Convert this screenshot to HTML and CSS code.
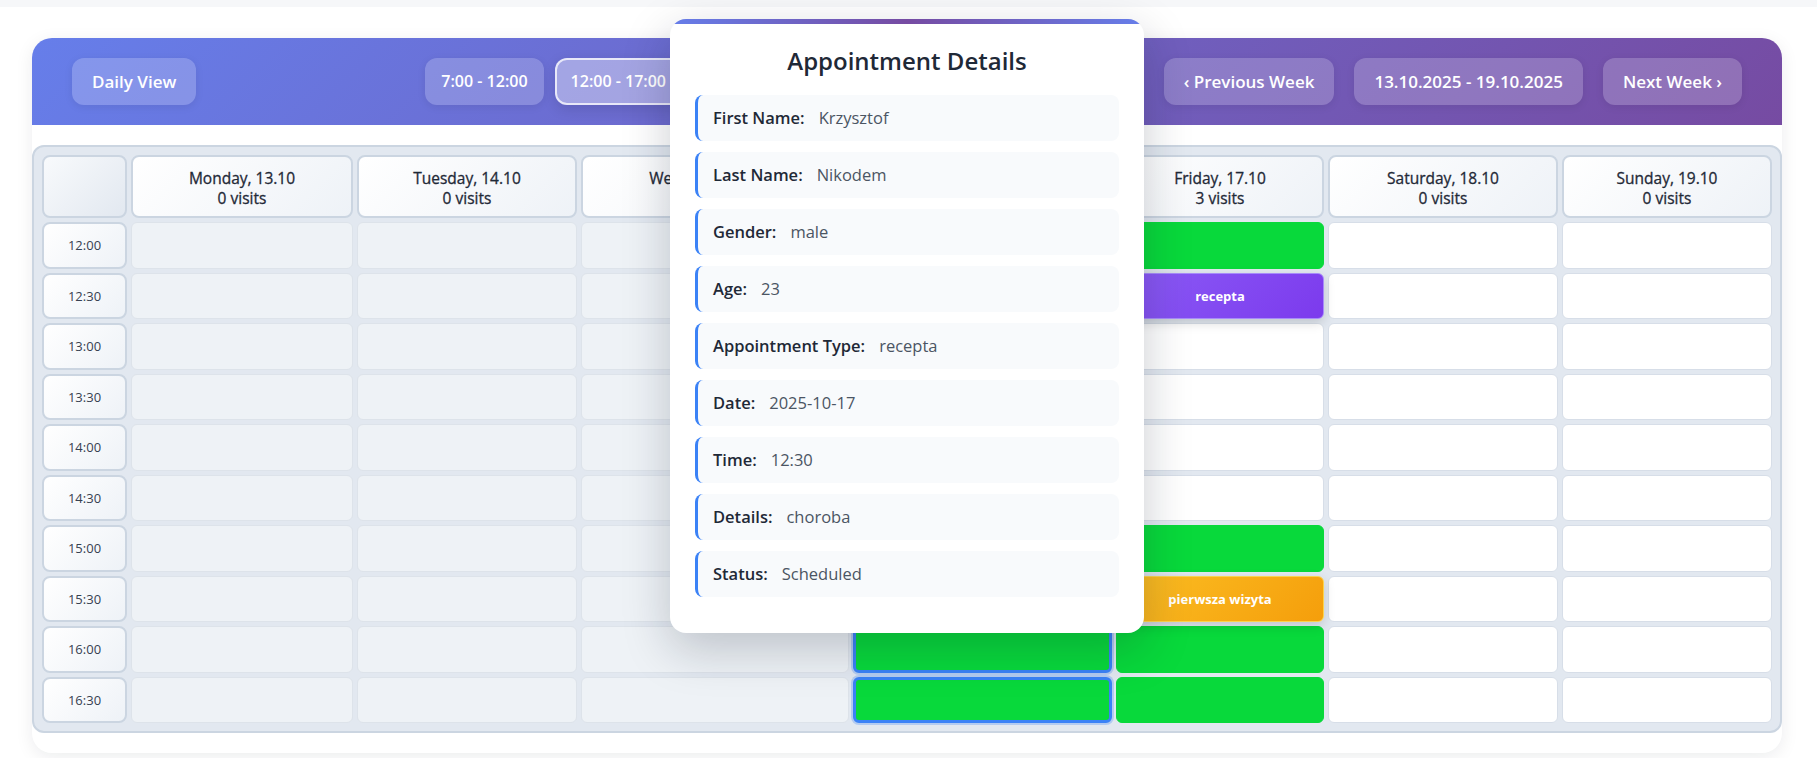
FILE: index.html
```html
<!DOCTYPE html>
<html lang="en">
<head>
<meta charset="utf-8">
<title>Weekly Calendar</title>
<link rel="stylesheet" href="styles.css">
</head>
<body>
<div class="page">
  <div class="card">
    <header class="toolbar">
      <button class="tb-btn">Daily View</button>
      <div class="ranges">
        <button class="tb-btn range">7:00 - 12:00</button>
        <button class="tb-btn range active">12:00 - 17:00</button>
        <button class="tb-btn range">17:00 - 22:00</button>
      </div>
      <div class="week-nav">
        <button class="tb-btn">‹ Previous Week</button>
        <button class="tb-btn">13.10.2025 - 19.10.2025</button>
        <button class="tb-btn">Next Week ›</button>
      </div>
    </header>
    <div class="calendar-wrap">
      <div class="calendar">
        <div class="corner"></div>
        <div class="day-head"><span>Monday, 13.10</span><span>0 visits</span></div>
        <div class="day-head"><span>Tuesday, 14.10</span><span>0 visits</span></div>
        <div class="day-head"><span>Wednesday, 15.10</span><span>0 visits</span></div>
        <div class="day-head"><span>Thursday, 16.10</span><span>2 visits</span></div>
        <div class="day-head"><span>Friday, 17.10</span><span>3 visits</span></div>
        <div class="day-head"><span>Saturday, 18.10</span><span>0 visits</span></div>
        <div class="day-head"><span>Sunday, 19.10</span><span>0 visits</span></div>

        <div class="time">12:00</div>
        <div class="slot past"></div><div class="slot past"></div><div class="slot past"></div><div class="slot past"></div>
        <div class="slot green"></div><div class="slot"></div><div class="slot"></div>

        <div class="time">12:30</div>
        <div class="slot past"></div><div class="slot past"></div><div class="slot past"></div><div class="slot past"></div>
        <div class="slot appt recepta">recepta</div><div class="slot"></div><div class="slot"></div>

        <div class="time">13:00</div>
        <div class="slot past"></div><div class="slot past"></div><div class="slot past"></div><div class="slot past"></div>
        <div class="slot"></div><div class="slot"></div><div class="slot"></div>

        <div class="time">13:30</div>
        <div class="slot past"></div><div class="slot past"></div><div class="slot past"></div><div class="slot past"></div>
        <div class="slot"></div><div class="slot"></div><div class="slot"></div>

        <div class="time">14:00</div>
        <div class="slot past"></div><div class="slot past"></div><div class="slot past"></div><div class="slot past"></div>
        <div class="slot"></div><div class="slot"></div><div class="slot"></div>

        <div class="time">14:30</div>
        <div class="slot past"></div><div class="slot past"></div><div class="slot past"></div><div class="slot past"></div>
        <div class="slot"></div><div class="slot"></div><div class="slot"></div>

        <div class="time">15:00</div>
        <div class="slot past"></div><div class="slot past"></div><div class="slot past"></div><div class="slot past"></div>
        <div class="slot green"></div><div class="slot"></div><div class="slot"></div>

        <div class="time">15:30</div>
        <div class="slot past"></div><div class="slot past"></div><div class="slot past"></div><div class="slot past"></div>
        <div class="slot appt first">pierwsza wizyta</div><div class="slot"></div><div class="slot"></div>

        <div class="time">16:00</div>
        <div class="slot past"></div><div class="slot past"></div><div class="slot past"></div><div class="slot green selected"></div>
        <div class="slot green"></div><div class="slot"></div><div class="slot"></div>

        <div class="time">16:30</div>
        <div class="slot past"></div><div class="slot past"></div><div class="slot past"></div><div class="slot green selected"></div>
        <div class="slot green"></div><div class="slot"></div><div class="slot"></div>
      </div>
    </div>
  </div>
</div>

<div class="modal">
  <h2 class="modal-title">Appointment Details</h2>
  <div class="field"><span class="label">First Name:</span><span class="value">Krzysztof</span></div>
  <div class="field"><span class="label">Last Name:</span><span class="value">Nikodem</span></div>
  <div class="field"><span class="label">Gender:</span><span class="value">male</span></div>
  <div class="field"><span class="label">Age:</span><span class="value">23</span></div>
  <div class="field"><span class="label">Appointment Type:</span><span class="value">recepta</span></div>
  <div class="field"><span class="label">Date:</span><span class="value">2025-10-17</span></div>
  <div class="field"><span class="label">Time:</span><span class="value">12:30</span></div>
  <div class="field"><span class="label">Details:</span><span class="value">choroba</span></div>
  <div class="field"><span class="label">Status:</span><span class="value">Scheduled</span></div>
</div>
</body>
</html>
```
FILE: styles.css
```css
* { box-sizing: border-box; }

html, body {
  margin: 0;
  padding: 0;
}

body {
  background: #f6f7f9;
  font-family: "Open Sans", "Noto Sans", "Liberation Sans", sans-serif;
  color: #1f2937;
  position: relative;
}

.page {
  margin-top: 7px;
  background: #ffffff;
  padding: 31px 35px 5px 32px;
}

.card {
  background: #ffffff;
  border-radius: 20px;
  box-shadow: 0 4px 18px rgba(15, 23, 42, 0.08);
  overflow: hidden;
  padding-bottom: 20px;
}

/* ---------- toolbar ---------- */
.toolbar {
  display: flex;
  align-items: center;
  padding: 20px 40px;
  background: linear-gradient(135deg, #667eea 0%, #764ba2 100%);
}

.tb-btn {
  font-family: inherit;
  font-size: 17px;
  font-weight: 600;
  line-height: 23px;
  color: #ffffff;
  background: rgba(255, 255, 255, 0.2);
  border: 2px solid transparent;
  border-radius: 12px;
  padding: 10px 18px;
  box-shadow: 0 2px 8px rgba(0, 0, 0, 0.08);
  white-space: nowrap;
  cursor: pointer;
}

.tb-btn.range {
  font-size: 16px;
  padding: 10px 14px;
}

.tb-btn.active {
  background: rgba(255, 255, 255, 0.38);
  border-color: rgba(255, 255, 255, 0.75);
  box-shadow: 0 4px 14px rgba(0, 0, 0, 0.12);
}

.ranges {
  display: flex;
  gap: 11px;
  margin-left: 229px;
}

.week-nav {
  display: flex;
  gap: 20px;
  margin-left: auto;
}

/* ---------- calendar ---------- */
.calendar-wrap {
  padding-top: 20px;
}

.calendar {
  display: grid;
  grid-template-columns: 85px 222px 220px 268px 259px 208px 230px 210px;
  grid-template-rows: 63px repeat(10, 46.5px);
  gap: 4px;
  background: #e2e8f0;
  border: 2px solid #cbd5e1;
  border-radius: 12px;
  padding: 8px;
}

.corner {
  border: 2px solid #cbd5e1;
  border-radius: 8px;
  background: linear-gradient(135deg, #f8fafc 0%, #e2e8f0 100%);
}

.day-head {
  border: 2px solid #cbd5e1;
  border-radius: 8px;
  background: linear-gradient(135deg, #ffffff 0%, #eef2f7 100%);
  display: flex;
  flex-direction: column;
  align-items: center;
  justify-content: center;
  padding-top: 3px;
  font-size: 15.5px;
  font-weight: 400;
  -webkit-text-stroke: 0.3px currentColor;
  line-height: 20px;
  color: #1f2937;
}

.time {
  border: 2px solid #cbd5e1;
  border-radius: 8px;
  background: linear-gradient(135deg, #ffffff 0%, #eef2f7 100%);
  display: flex;
  align-items: center;
  justify-content: center;
  font-size: 13px;
  color: #374151;
}

.slot {
  border: 1px solid #d7dee8;
  border-radius: 6px;
  background: #ffffff;
}

.slot.past {
  background: #eef2f6;
  border-color: #dde3ea;
}

.slot.green {
  background: #08d93b;
  border-color: #08d93b;
}

.slot.selected {
  border: 3px solid #3b82f6;
  box-shadow: 0 0 0 2px rgba(59, 130, 246, 0.28);
}

.slot.appt {
  display: flex;
  align-items: center;
  justify-content: center;
  color: #ffffff;
  font-size: 13px;
  font-weight: 700;
  box-shadow: 0 4px 12px rgba(0, 0, 0, 0.15);
  position: relative;
}

.slot.recepta {
  background: linear-gradient(135deg, #8b5cf6 0%, #7c3aed 100%);
  border-color: #a78bfa;
}

.slot.first {
  background: linear-gradient(135deg, #fbbf24 0%, #f59e0b 100%);
  border-color: #fcd34d;
}

/* ---------- modal ---------- */
.modal {
  position: absolute;
  left: 670px;
  top: 19px;
  width: 474px;
  background:
    linear-gradient(90deg, #667eea 0%, #764ba2 50%, #667eea 100%) top / 100% 5px no-repeat,
    #ffffff;
  border-radius: 16px;
  box-shadow: 0 16px 48px rgba(15, 23, 42, 0.22);
  padding: 27px 25px 25px;
  z-index: 10;
}

.modal-title {
  margin: 0 0 20px;
  text-align: center;
  font-size: 24px;
  font-weight: 600;
  line-height: 29px;
  color: #1f2937;
}

.field {
  display: flex;
  align-items: baseline;
  gap: 14px;
  background: #f8fafc;
  border-left: 3px solid #3b82f6;
  border-radius: 8px;
  padding: 12px 15px;
  margin-bottom: 11px;
  font-size: 16.5px;
  line-height: 22px;
}

.field .label {
  font-weight: 600;
  color: #1f2937;
}

.field .value {
  color: #4b5563;
}
```
